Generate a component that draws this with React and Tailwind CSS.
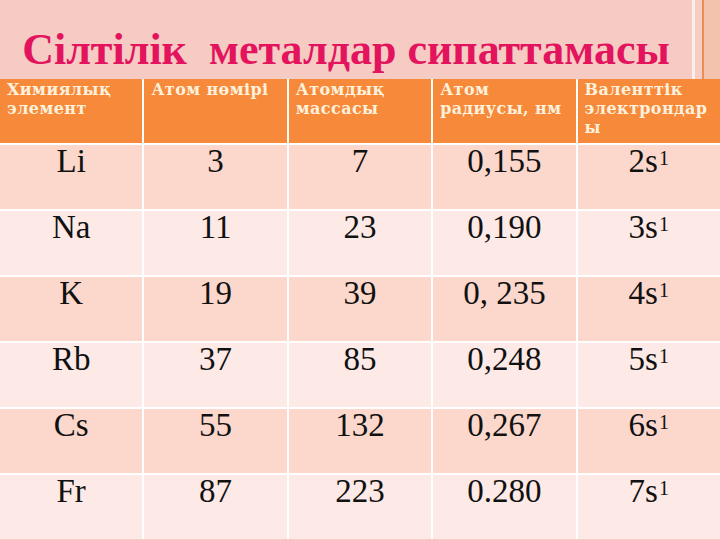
import React from "react";

const headers = [
  ["Химиялық", "элемент"],
  ["Атом нөмірі"],
  ["Атомдық", "массасы"],
  ["Атом", "радиусы, нм"],
  ["Валенттік", "электрондар", "ы"],
];

const rows = [
  ["Li", "3", "7", "0,155", "2"],
  ["Na", "11", "23", "0,190", "3"],
  ["K", "19", "39", "0, 235", "4"],
  ["Rb", "37", "85", "0,248", "5"],
  ["Cs", "55", "132", "0,267", "6"],
  ["Fr", "87", "223", "0.280", "7"],
];

export default function App() {
  return (
    <div className="w-[720px] h-[540px] overflow-hidden bg-[#f5cbc3] flex flex-col">
      <div className="h-[79px] flex shrink-0">
        <div className="flex-1 flex justify-center items-start pt-[28px]">
          <h1
            className="text-[44px] leading-none font-bold text-[#e3135d] whitespace-pre"
            style={{ fontFamily: '"Liberation Serif", serif' }}
          >
            {"Сілтілік  металдар сипаттамасы"}
          </h1>
        </div>
        <div className="flex h-full">
          <div className="w-[3px] bg-[#fcede8]" />
          <div className="w-[7px] bg-[#f5cdc3]" />
          <div className="w-[2px] bg-[#e98e58]" />
          <div className="w-[16px] bg-[#f3c3ae]" />
        </div>
      </div>
      <div className="grid grid-cols-5 gap-[2px] bg-white">
        {headers.map((lines, i) => (
          <div
            key={i}
            className="h-[64px] bg-[#f7893b] px-[7px] pt-[1px] text-[16px] leading-[19px] tracking-[0.4px] font-bold text-[#fff1dc]"
            style={{ fontFamily: '"DejaVu Serif", serif' }}
          >
            {lines.map((l, j) => (
              <div key={j} className="whitespace-nowrap">{l}</div>
            ))}
          </div>
        ))}
        {rows.map((r, ri) =>
          r.map((c, ci) => (
            <div
              key={ri + "-" + ci}
              className={
                "h-[64px] text-center text-[33px] leading-none text-[#111] " +
                (ri % 2 === 0 ? "bg-[#fbd7cc]" : "bg-[#fde9e5]")
              }
              style={{ fontFamily: '"Liberation Serif", serif' }}
            >
              {ci === 4 ? (
                <span>
                  {c}s
                  <span className="text-[20px] leading-none align-top relative top-[3px] ml-[1px]">1</span>
                </span>
              ) : (
                c
              )}
            </div>
          ))
        )}
      </div>
    </div>
  );
}
